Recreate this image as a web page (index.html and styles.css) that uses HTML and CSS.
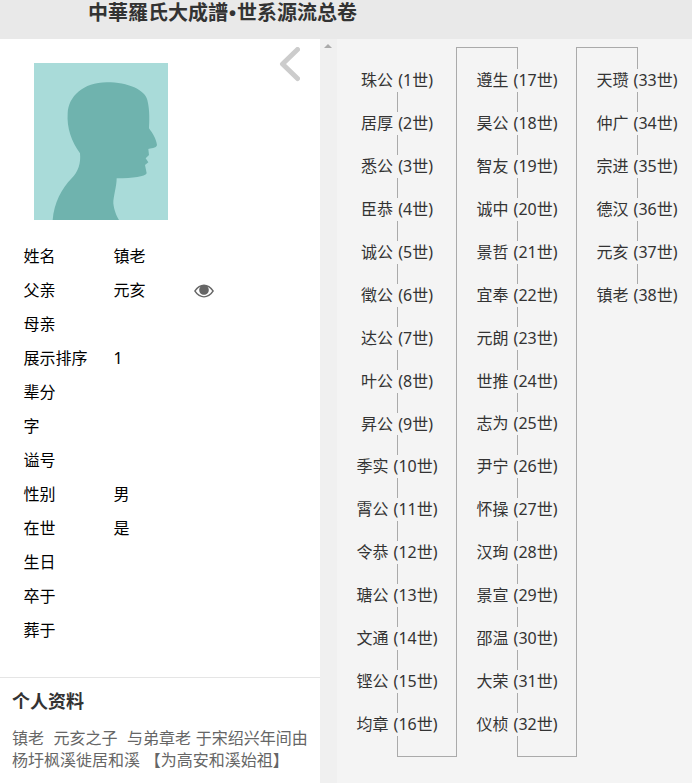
FILE: index.html
```html
<!DOCTYPE html>
<html lang="zh">
<head>
<meta charset="utf-8">
<title>世系源流总卷</title>
<link rel="stylesheet" href="styles.css">
</head>
<body>
<header class="topbar"><h1 class="title">中華羅氏大成譜<span class="dot">•</span>世系源流总卷</h1></header>
<div class="main">
  <aside class="profile">
    <div class="photo-row">
      <svg class="photo" viewBox="102 189 402 471" aria-hidden="true">
        <rect x="102" y="189" width="402" height="471" fill="#a9dbd9"/>
        <path fill="#6fb3ae" d="M158 660C162 610 185 565 215 535C235 515 243 490 240 460C215 425 200 385 203 340C205 290 250 247 320 247C385 247 435 270 442 300C450 330 448 370 447 385C458 400 468 415 471 435C470 445 450 445 445 447L447 465L437 475L445 487L435 495L440 520C435 530 400 535 350 535C350 560 340 590 340 610C342 630 350 650 357 660Z"/>
      </svg>
      <svg class="back" viewBox="0 0 22 36" aria-hidden="true"><path d="M19.500 2.500L4.500 17L19.500 31.500" fill="none" stroke="#ccc" stroke-width="5" stroke-linecap="round" stroke-linejoin="round"/></svg>
    </div>
    <dl class="facts">
      <div class="fact"><dt>姓名</dt><dd>镇老</dd></div>
      <div class="fact"><dt>父亲</dt><dd>元亥</dd>
        <svg class="eye" viewBox="0 0 20 14" aria-hidden="true"><path fill="#666" fill-rule="evenodd" d="M0 7C3 2.5 6.5 .5 10 .5S17 2.500 20 7C17 11.500 13.500 13.500 10 13.500S3 11.500 0 7ZM1.800 7C4 10.200 7 12.200 10 12.200S16 10.200 18.200 7C16.800 5 15.200 3.600 13.500 2.700C14.300 3.500 14.800 4.700 14.800 6C14.800 8.700 12.700 10.800 10 10.800S5.200 8.700 5.200 6C5.200 4.700 5.700 3.500 6.500 2.700C4.800 3.600 3.200 5 1.800 7Z"/></svg>
      </div>
      <div class="fact"><dt>母亲</dt><dd></dd></div>
      <div class="fact"><dt>展示排序</dt><dd>1</dd></div>
      <div class="fact"><dt>辈分</dt><dd></dd></div>
      <div class="fact"><dt>字</dt><dd></dd></div>
      <div class="fact"><dt>谥号</dt><dd></dd></div>
      <div class="fact"><dt>性别</dt><dd>男</dd></div>
      <div class="fact"><dt>在世</dt><dd>是</dd></div>
      <div class="fact"><dt>生日</dt><dd></dd></div>
      <div class="fact"><dt>卒于</dt><dd></dd></div>
      <div class="fact"><dt>葬于</dt><dd></dd></div>
    </dl>
    <section class="bio">
      <h2 class="bio-title">个人资料</h2>
      <p class="bio-text">镇老&nbsp; 元亥之子&nbsp; 与弟章老 于宋绍兴年间由杨圩枫溪徙居和溪 【为高安和溪始祖】</p>
    </section>
  </aside>
  <div class="scroller"><span class="scroll-up"></span></div>
  <section class="tree">
    <div class="col col-first">
      <div class="node">珠公 (1世)</div><i class="link"></i>
      <div class="node">居厚 (2世)</div><i class="link"></i>
      <div class="node">悉公 (3世)</div><i class="link"></i>
      <div class="node">臣恭 (4世)</div><i class="link"></i>
      <div class="node">诚公 (5世)</div><i class="link"></i>
      <div class="node">徵公 (6世)</div><i class="link"></i>
      <div class="node">达公 (7世)</div><i class="link"></i>
      <div class="node">叶公 (8世)</div><i class="link"></i>
      <div class="node">昇公 (9世)</div><i class="link"></i>
      <div class="node">季实 (10世)</div><i class="link"></i>
      <div class="node">霄公 (11世)</div><i class="link"></i>
      <div class="node">令恭 (12世)</div><i class="link"></i>
      <div class="node">瑭公 (13世)</div><i class="link"></i>
      <div class="node">文通 (14世)</div><i class="link"></i>
      <div class="node">铿公 (15世)</div><i class="link"></i>
      <div class="node">均章 (16世)</div>
      <i class="turn-out"></i>
    </div>
    <div class="col col-next">
      <i class="turn-in"></i>
      <div class="node">遵生 (17世)</div><i class="link"></i>
      <div class="node">昊公 (18世)</div><i class="link"></i>
      <div class="node">智友 (19世)</div><i class="link"></i>
      <div class="node">诚中 (20世)</div><i class="link"></i>
      <div class="node">景哲 (21世)</div><i class="link"></i>
      <div class="node">宜奉 (22世)</div><i class="link"></i>
      <div class="node">元朗 (23世)</div><i class="link"></i>
      <div class="node">世推 (24世)</div><i class="link"></i>
      <div class="node">志为 (25世)</div><i class="link"></i>
      <div class="node">尹宁 (26世)</div><i class="link"></i>
      <div class="node">怀操 (27世)</div><i class="link"></i>
      <div class="node">汉珣 (28世)</div><i class="link"></i>
      <div class="node">景宣 (29世)</div><i class="link"></i>
      <div class="node">邵温 (30世)</div><i class="link"></i>
      <div class="node">大荣 (31世)</div><i class="link"></i>
      <div class="node">仪桢 (32世)</div>
      <i class="turn-out"></i>
    </div>
    <div class="col col-last">
      <i class="turn-in"></i>
      <div class="node">天瓒 (33世)</div><i class="link"></i>
      <div class="node">仲广 (34世)</div><i class="link"></i>
      <div class="node">宗进 (35世)</div><i class="link"></i>
      <div class="node">德汉 (36世)</div><i class="link"></i>
      <div class="node">元亥 (37世)</div><i class="link"></i>
      <div class="node">镇老 (38世)</div>
    </div>
  </section>
</div>
</body>
</html>
```
FILE: styles.css
```css
* { box-sizing: border-box; }
html, body { margin: 0; height: 100%; overflow: hidden; }
body {
  display: flex;
  flex-direction: column;
  font-family: "Noto Sans", "Noto Sans CJK SC", sans-serif;
  font-size: 16px;
  color: #000;
  background: #f4f4f4;
}
.topbar { flex: none; height: 39px; background: #e9e9e9; padding-left: 88px; }
.title { margin: 0; font-size: 20px; line-height: 26px; font-weight: 700; color: #333; white-space: nowrap; }
.dot { font-family: "Liberation Sans", sans-serif; padding: 0 1px; }
.main { flex: 1; display: flex; min-height: 0; }

.profile { flex: none; width: 320px; background: #fff; display: flex; flex-direction: column; }
.photo-row { display: flex; align-items: flex-start; height: 200px; padding: 8px 20px 0 34px; justify-content: space-between; }
.photo { display: block; width: 134px; height: 157px; margin-top: 16px; }
.back { display: block; width: 22px; height: 36px; }

.facts { margin: 0; padding-left: 24px; }
.fact { display: flex; align-items: center; height: 34px; line-height: 24px; margin-left: -.5px; }
.fact dt { width: 90px; }
.fact dd { margin: 0; width: 80px; }
.eye { width: 20px; height: 14px; margin-top: 2px; margin-left: .5px; }

.bio { margin-top: 30px; border-top: 1px solid #e5e5e5; padding: 10px 12px 0; }
.bio-title { margin: 0; font-size: 18px; line-height: 26px; font-weight: 700; color: #333; }
.bio-text { margin: 13px -2px 0 0; line-height: 22px; color: #666; word-spacing: .6px; }

.scroller { flex: none; width: 17px; background: #f0f0f0; position: relative; }
.scroll-up {
  position: absolute; left: 4px; top: 5px;
  border-left: 4px solid transparent; border-right: 4px solid transparent; border-bottom: 4px solid #aaa;
}

.tree { flex: 1; display: grid; grid-template-columns: 119px 120px 120px; align-items: start; padding-top: 8px; color: #333; }
.col { display: flex; flex-direction: column; height: 710px; }
.col-first { padding-top: 22px; }
.col-next, .col-last { border-left: 1px solid #aaa; }
.node { width: 120px; height: 23px; padding-top: 1px; line-height: 20px; text-align: center; white-space: nowrap; word-spacing: 1px; }
.link { display: block; width: 1px; height: 20px; margin-left: 60px; background: #aaa; }
.turn-in { display: block; width: 61px; height: 22px; border-top: 1px solid #aaa; border-right: 1px solid #aaa; }
.turn-out { display: block; height: 21px; margin-left: 60px; border-left: 1px solid #aaa; border-bottom: 1px solid #aaa; }
```
